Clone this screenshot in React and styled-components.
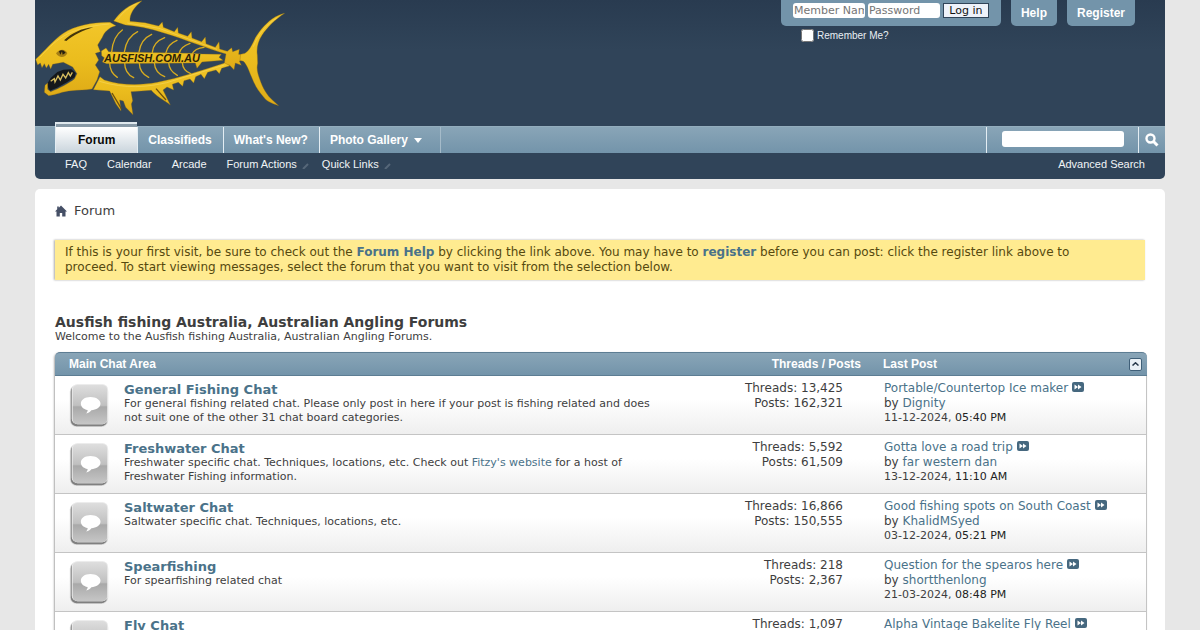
import React, { useState } from 'react'
import styled, { createGlobalStyle } from 'styled-components'

const forums = [
	{
		id: 1,
		title: 'General Fishing Chat',
		text: 'For general fishing related chat. Please only post in here if your post is fishing related and does not suit one of the other 31 chat board categories.',
		threads: '13,425',
		posts: '162,321',
		last: 'Portable/Countertop Ice maker',
		user: 'Dignity',
		date: '11-12-2024,',
		time: '05:40 PM',
	},
	{
		id: 2,
		title: 'Freshwater Chat',
		text: <>Freshwater specific chat. Techniques, locations, etc. Check out <a href='#fitzys'>Fitzy's website</a> for a host of Freshwater Fishing information.</>,
		threads: '5,592',
		posts: '61,509',
		last: 'Gotta love a road trip',
		user: 'far western dan',
		date: '13-12-2024,',
		time: '11:10 AM',
	},
	{
		id: 3,
		title: 'Saltwater Chat',
		text: 'Saltwater specific chat. Techniques, locations, etc.',
		threads: '16,866',
		posts: '150,555',
		last: 'Good fishing spots on South Coast',
		user: 'KhalidMSyed',
		date: '03-12-2024,',
		time: '05:21 PM',
	},
	{
		id: 4,
		title: 'Spearfishing',
		text: 'For spearfishing related chat',
		threads: '218',
		posts: '2,367',
		last: 'Question for the spearos here',
		user: 'shortthenlong',
		date: '21-03-2024,',
		time: '08:48 PM',
	},
	{
		id: 5,
		title: 'Fly Chat',
		threads: '1,097',
		last: 'Alpha Vintage Bakelite Fly Reel',
	},
]

const subLinks = [
	{ name: 'FAQ' },
	{ name: 'Calendar' },
	{ name: 'Arcade' },
	{ name: 'Forum Actions', menu: true },
	{ name: 'Quick Links', menu: true },
]

function FishLogo() {
	return (
		<svg width='255' height='120' viewBox='15 0 765 360' role='img' aria-label='Ausfish'>
			<defs>
				<linearGradient id='gold' x1='0' y1='0' x2='0' y2='1'>
					<stop offset='0' stopColor='#f2c62a' />
					<stop offset='0.5' stopColor='#ebbd1e' />
					<stop offset='1' stopColor='#dfab17' />
				</linearGradient>
			</defs>
			{/* head and jaws */}
			<path d='M50 254 L62 234 L82 216 L100 209 L124 208 L137 219 L134 232 L112 246 L84 262 L60 272 Z' fill='#14171b' />
			<g fill='url(#gold)' stroke='#8a6812' strokeWidth='1'>
				<path d='M17 178 C45 152 68 122 100 100 C136 76 190 66 240 67 L258 77 C236 82 222 98 217 112 L203 135 L211 155 L196 160 L206 180 L196 195 L209 215 L201 240 L186 267 C165 271 146 270 126 272 C98 274 78 284 56 287 L43 277 L45 256 L53 249 L53 268 L62 275 C88 265 116 250 133 237 L141 221 L128 201 L100 187 L68 193 L62 207 L56 193 L49 204 L43 191 L36 203 L31 189 L23 195 Z' />
				{/* back with the top fin */}
				<path d='M251 63 C270 35 298 13 336 2 C312 22 298 42 300 64 L345 68 L386 78 L397 66 L400 82 L433 95 L443 82 L445 99 L473 109 L484 95 L486 114 L515 125 L526 111 L528 131 L556 142 L567 125 L569 147 L592 154 L605 143 L608 155 L628 148 L626 163 L640 164 L640 180 L628 183 L634 196 L616 189 L612 209 L599 196 L582 195 L588 162 C530 145 466 118 399 98 C359 85 320 78 286 75 Z' />
				{/* belly with the lower fins */}
				<path d='M190 269 L210 230 L223 240 C271 256 330 257 382 247 C449 233 515 212 584 189 L600 197 L575 205 L568 221 L558 210 L533 217 L523 236 L513 223 L497 230 L491 249 L480 237 L462 242 L458 259 L445 247 L427 253 L431 270 L411 261 L399 270 L421 315 C401 300 376 287 364 271 L303 275 L308 302 L304 312 L309 344 L287 322 L280 303 L269 300 L273 333 L258 312 L239 273 Z' />
				{/* tail */}
				<path d='M632 163 L645 160 C658 151 663 139 670 126 C679 103 704 73 726 57 Q747 43 764 40 C736 58 711 83 696 106 C684 124 679 145 682 165 L683 190 C679 206 683 220 689 237 C698 264 711 286 728 301 L746 317 C725 310 709 303 700 290 C684 272 673 253 665 232 C656 211 651 194 640 184 L630 181 Z' />
				{/* spine */}
				<path d='M214 153 L228 144 L236 155 L480 160 L517 162 L574 163 L567 172 L579 181 L516 186 L501 205 L496 189 L230 191 L217 186 L223 173 L215 167 Z' />
			</g>
			<g fill='none' stroke='#d8ac1f' strokeWidth='4' strokeLinecap='round'>
				<path d='M245 156 C248 122 261 101 277 90 M283 156 C288 123 302 105 323 95 M327 156 C331 128 345 112 365 103 M367 157 C369 136 383 121 404 113 M408 158 C412 139 424 128 441 121 M448 159 C451 145 463 136 480 130 M486 162 C492 150 505 144 522 142' />
				<path d='M239 188 C239 207 247 222 262 232 M284 188 C284 207 293 224 311 233 M328 188 C328 207 338 223 356 232 M373 188 C374 206 385 222 404 230 M416 188 C417 204 426 217 442 226 M457 188 C458 204 467 215 482 221' />
			</g>
			<g fill='none' stroke='#f9dc68' strokeWidth='2' opacity='0.8'>
				<path d='M29 172 C73 128 102 83 238 72' />
				<path d='M263 58 C281 35 298 20 319 12' />
				<path d='M292 69 L387 85 L561 148' />
				<path d='M208 244 C288 268 353 261 410 248 L583 195' />
				<path d='M670 140 C684 103 708 75 740 54' />
			</g>
			<path d='M102 121 C126 99 154 85 190 82 C160 91 130 105 109 123 Z' fill='#44360b' />
			<path d='M78 160 C90 145 106 147 112 160 C106 173 88 176 78 160 Z' fill='#a57f16' />
			<path d='M87 154 Q98 146 107 158 L98 164 L96 154 L91 164 Z' fill='#251f10' />
			<path d='M62 244 L73 236 L75 246 L84 228 L91 240 L99 223 L107 234 L115 218 L121 228 L127 217' fill='none' stroke='#d8bd60' strokeWidth='4' />
			<path d='M246 279 L274 326 M378 266 L408 300' fill='none' stroke='#6f510c' strokeWidth='4' />
			<LogoText x='222' y='186'>AUSFISH.COM.AU</LogoText>
		</svg>
	)
}

function HomeIcon() {
	return (
		<svg width='12' height='12' viewBox='0 0 12 12' aria-hidden='true'>
			<path d='M6 0.500 L12 6.500 H10.500 V11.500 H7.200 V8 H4.800 V11.500 H1.500 V6.500 H0 L2.200 4.300 V1.500 H3.800 V2.700 Z' fill='#454f66' />
		</svg>
	)
}

function BubbleIcon() {
	return (
		<svg width='42' height='48' viewBox='0 0 42 48' aria-hidden='true'>
			<defs>
				<linearGradient id='key' x1='0' y1='0' x2='0' y2='1'>
					<stop offset='0' stopColor='#dedede' />
					<stop offset='0.52' stopColor='#c0c0c0' />
					<stop offset='0.56' stopColor='#a9a9a9' />
					<stop offset='1' stopColor='#c6c6c6' />
				</linearGradient>
			</defs>
			<rect x='1' y='2' width='40' height='44' rx='7' fill='#d8d8d8' />
			<rect x='2' y='3' width='38' height='42' rx='6' fill='#808080' />
			<rect x='3' y='1' width='38' height='42' rx='6' fill='#ececec' />
			<rect x='4' y='2' width='36' height='41' rx='5' fill='url(#key)' />
			<path d='M22.500 14.500 C28.500 14.500 33 17.500 33 21.500 C33 25.500 28.500 28.300 23.500 28.500 C22.500 30 20.500 31.300 18 31.800 C19.300 30.500 19.700 29.300 19.500 28.300 C15 27.500 12.500 24.800 12.500 21.500 C12.500 17.500 16.500 14.500 22.500 14.500 Z' fill='#fff' />
		</svg>
	)
}

function GotoIcon() {
	return (
		<svg width='12' height='10' viewBox='0 0 12 10' aria-hidden='true'>
			<rect width='12' height='10' rx='2' fill='#46687f' />
			<path d='M2.500 2.500 L6 5 L2.500 7.500 Z M6 2.500 L9.500 5 L6 7.500 Z' fill='#fff' />
		</svg>
	)
}

function App() {
	const [open, setOpen] = useState(true)
	return (
		<>
			<GlobalStyle />
			<Page>
				<Header>
					<Top>
						<a href='#home'><FishLogo /></a>
						<UserBar>
							<div>
								<Login onSubmit={e => e.preventDefault()}>
									<LoginInput type='text' placeholder='Member Name' aria-label='Member Name' />
									<LoginInput type='password' placeholder='Password' aria-label='Password' />
									<LoginButton>Log in</LoginButton>
								</Login>
								<Remember><input type='checkbox' />Remember Me?</Remember>
							</div>
							<UserLink href='#help'>Help</UserLink>
							<UserLink href='#register'>Register</UserLink>
						</UserBar>
					</Top>
					<NavBar>
						<Tabs>
							<ActiveTab href='#forum'>Forum</ActiveTab>
							<Tab href='#classifieds'>Classifieds</Tab>
							<Tab href='#new'>What's New?</Tab>
							<Tab href='#gallery' $menu>
								Photo Gallery
								<svg width='8' height='5' viewBox='0 0 8 5' aria-hidden='true'><path d='M0 0 H8 L4 5 Z' fill='#fff' /></svg>
							</Tab>
						</Tabs>
						<Search onSubmit={e => e.preventDefault()}>
							<SearchBox><SearchInput type='text' aria-label='Search' /></SearchBox>
							<SearchButton aria-label='Search'>
								<svg width='14' height='14' viewBox='0 0 14 14' aria-hidden='true'>
									<circle cx='5.500' cy='5.500' r='4' fill='none' stroke='#fff' strokeWidth='2.400' />
									<path d='M8.500 8.500 L12.500 12.500' stroke='#fff' strokeWidth='3' />
								</svg>
							</SearchButton>
						</Search>
					</NavBar>
					<SubNav>
						<SubList>
							{subLinks.map(link => (
								<SubItem key={link.name} $menu={link.menu}>
									<a href='#sub'>{link.name}</a>
									{link.menu && <svg width='12' height='8' viewBox='0 0 12 8' aria-hidden='true'><path d='M3 8 L8 3' stroke='#566779' strokeWidth='2' /></svg>}
								</SubItem>
							))}
						</SubList>
						<a href='#advanced'>Advanced Search</a>
					</SubNav>
				</Header>
				<Content>
					<Crumb><HomeIcon />Forum</Crumb>
					<Notice>
						If this is your first visit, be sure to check out the <a href='#faq'>Forum Help</a> by clicking the link above. You may have to <a href='#register'>register</a> before you can post: click the register link above to proceed. To start viewing messages, select the forum that you want to visit from the selection below.
					</Notice>
					<Title>Ausfish fishing Australia, Australian Angling Forums</Title>
					<Welcome>Welcome to the Ausfish fishing Australia, Australian Angling Forums.</Welcome>
					<ForumTable>
						<thead>
							<tr>
								<HeadCell>Main Chat Area</HeadCell>
								<HeadCell $kind='stats'>Threads / Posts</HeadCell>
								<HeadCell $kind='last'>
									<HeadRow>
										Last Post
										<Collapse aria-label='Toggle Main Chat Area' onClick={() => setOpen(!open)}>
											<svg width='7' height='4' viewBox='0 0 7 4' aria-hidden='true'><path d='M0.500 3.500 L3.500 0.800 L6.500 3.500' fill='none' stroke='#26384a' strokeWidth='1.500' /></svg>
										</Collapse>
									</HeadRow>
								</HeadCell>
							</tr>
						</thead>
						<tbody>
							{open && forums.map(item => (
								<Row key={item.id}>
									<td>
										<Forum>
											<BubbleIcon />
											<div>
												<ForumTitle><a href='#forum'>{item.title}</a></ForumTitle>
												<Description>{item.text}</Description>
											</div>
										</Forum>
									</td>
									<Stats>
										<div>Threads: {item.threads}</div>
										{item.posts && <div>Posts: {item.posts}</div>}
									</Stats>
									<LastPost>
										<div><a href='#thread'>{item.last}</a> <a href='#post' aria-label='Go to last post'><GotoIcon /></a></div>
										{item.user && <div>by <a href='#user'>{item.user}</a></div>}
										{item.date && <PostDate>{item.date} <span>{item.time}</span></PostDate>}
									</LastPost>
								</Row>
							))}
						</tbody>
					</ForumTable>
				</Content>
			</Page>
		</>)
}

const arial = '"Liberation Sans", Arial, sans-serif'
const verdana = '"DejaVu Sans", Verdana, sans-serif'
const steel = 'linear-gradient(#89a5b7, #7394aa)'

const GlobalStyle = createGlobalStyle`
	* { box-sizing: border-box; }
	body {
		margin: 0;
		background: #e7e7e7;
		color: #3e3e3e;
		font: 12px/15px ${verdana};
	}
	a { color: #4a7289; text-decoration: none; }
	button, input { font-family: inherit; }
`

const Page = styled.div`
	margin: 0 35px;
	height: 100vh;
	overflow: hidden;
`
const Header = styled.header`
	background: #304459;
	border-radius: 0 0 5px 5px;
`
const Top = styled.div`
	display: flex;
	justify-content: space-between;
	height: 126px;
	padding-right: 30px;
	background: linear-gradient(#293b50, #304459 50px);
`
const LogoText = styled.text`
	font: italic bold 33px ${arial};
	fill: #2b2208;
`
const UserBar = styled.div`
	display: flex;
	align-items: flex-start;
	gap: 10px;
	font-family: ${arial};
`
const Login = styled.form`
	display: flex;
	gap: 3px;
	height: 26px;
	padding: 3px 12px 0;
	background: #7394aa;
	border-radius: 0 0 5px 5px;
	font-family: ${verdana};
`
const LoginInput = styled.input`
	width: 72px;
	height: 15px;
	padding: 0 1px;
	border: 0;
	border-radius: 3px;
	font-size: 11px;
	&::placeholder { color: #757575; }
`
const LoginButton = styled.button`
	width: 46px;
	height: 15px;
	padding: 0;
	border: 1px solid #304459;
	background: #eef2fa;
	color: #111;
	font-size: 11px;
	line-height: 13px;
`
const Remember = styled.label`
	display: flex;
	align-items: center;
	gap: 3px;
	padding: 2px 20px;
	color: #e8eef3;
	font-size: 10px;
	input { width: 13px; height: 13px; margin: 0; }
`
const UserLink = styled.a`
	height: 26px;
	padding: 0 10px;
	background: #7394aa;
	border-radius: 0 0 5px 5px;
	color: #fff;
	font-size: 12px;
	font-weight: bold;
	line-height: 26px;
`
const NavBar = styled.nav`
	display: flex;
	justify-content: space-between;
	height: 27px;
	padding-left: 20px;
	background: ${steel};
	border-top: 1px solid #93adbd;
	font-family: ${arial};
`
const Tabs = styled.div`
	display: flex;
	align-items: flex-end;
`
const Tab = styled.a`
	display: flex;
	align-items: center;
	gap: 6px;
	height: 26px;
	padding: ${props => props.$menu ? '0 18px 0 10px' : '0 11px 0 10px'};
	border-left: 1px solid #e3edf3;
	border-right: ${props => props.$menu ? '1px solid #a5bbc9' : '0'};
	color: #fff;
	font-size: 12px;
	font-weight: bold;
`
const ActiveTab = styled(Tab)`
	height: 31px;
	padding: 4px 22px 0;
	border-top: 2px solid #dfe8ed;
	background: linear-gradient(#8799a6 3px, #fff 3px, #c9d4dc);
	color: #0a0a0a;
`
const Search = styled.form`
	display: flex;
`
const SearchBox = styled.div`
	padding: 4px 14px 0 15px;
	border-left: 1px solid #e3edf3;
`
const SearchInput = styled.input`
	display: block;
	width: 122px;
	height: 16px;
	border: 0;
	border-radius: 3px;
`
const SearchButton = styled.button`
	display: grid;
	place-items: center;
	width: 27px;
	padding: 0;
	border: 0;
	border-left: 1px solid #e3edf3;
	background: none;
`
const SubNav = styled.nav`
	display: flex;
	justify-content: space-between;
	padding: 0 20px 3px;
	font: 11px/23px ${arial};
	height: 26px;
	a { color: #f0f4f7; }
`
const SubList = styled.ul`
	display: flex;
	margin: 0;
	padding: 0;
	list-style: none;
`
const SubItem = styled.li`
	display: flex;
	align-items: center;
	gap: 3px;
	padding: ${props => props.$menu ? '0 0 0 10px' : '0 10px'};
`
const Content = styled.main`
	margin-top: 10px;
	padding: 12px 18px 0 20px;
	background: #fff;
	border-radius: 5px 5px 0 0;
`
const Crumb = styled.div`
	display: flex;
	align-items: center;
	gap: 7px;
	font-size: 13px;
	line-height: 20px;
`
const Notice = styled.p`
	margin: 19px 2px 34px 0;
	padding: 5px 30px 5px 10px;
	background: #ffeb90;
	box-shadow: -1px 0 2px #aaa;
	color: #56490f;
	a { font-weight: bold; }
`
const Title = styled.h1`
	margin: 0;
	font-size: 14px;
	line-height: 16px;
`
const Welcome = styled.p`
	margin: 0 0 8px;
	font-size: 11px;
	line-height: 14px;
`
const ForumTable = styled.table`
	width: 100%;
	table-layout: fixed;
	border-spacing: 0;
	border-radius: 5px 5px 0 0;
	box-shadow: -1px 1px 2px #aaa;
	td { padding: 0; vertical-align: top; }
`
const HeadCell = styled.th`
	width: ${props => props.$kind === 'stats' ? '200px' : props.$kind === 'last' ? '264px' : 'auto'};
	height: 24px;
	padding: ${props => props.$kind === 'stats' ? '0 22px 0 0' : props.$kind === 'last' ? '0 5px 0 0' : '0 14px'};
	background: ${steel};
	border: solid #5d7d93;
	border-width: 1px 0;
	color: #fff;
	font: bold 12px/22px ${arial};
	text-align: ${props => props.$kind === 'stats' ? 'right' : 'left'};
	&:first-child { border-top-left-radius: 5px; }
	&:last-child { border-top-right-radius: 5px; }
`
const HeadRow = styled.div`
	display: flex;
	align-items: center;
	justify-content: space-between;
`
const Collapse = styled.button`
	display: grid;
	place-items: center;
	width: 13px;
	height: 13px;
	padding: 0;
	border: 1px solid #3f5f78;
	border-radius: 2px;
	background: #e9f0f5;
`
const Row = styled.tr`
	height: 59px;
	background: linear-gradient(#fff 40%, #eee);
	td { border-bottom: 1px solid #c4c4c4; }
	td:last-child { border-right: 1px solid #c4c4c4; }
`
const Forum = styled.div`
	display: flex;
	gap: 14px;
	padding: 7px 28px 0 13px;
	svg { flex: none; height: 46px; }
`
const ForumTitle = styled.h2`
	margin: 0;
	font-size: 13px;
	line-height: 14px;
`
const Description = styled.p`
	margin: 0;
	font-size: 11px;
	line-height: 14px;
`
const Stats = styled.td`
	&& { padding: 5px 40px 0 0; }
	text-align: right;
`
const LastPost = styled.td`
	&& { padding: 5px 0 0 1px; }
`
const PostDate = styled.div`
	font-size: 11px;
	line-height: 14px;
	span { color: #222; }
`
export default App
